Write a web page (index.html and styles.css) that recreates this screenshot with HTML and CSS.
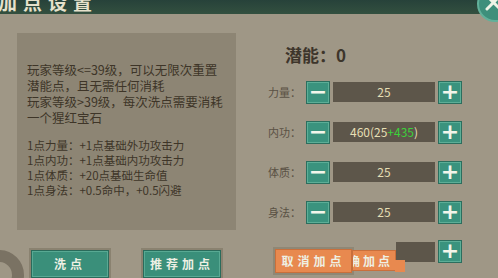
FILE: index.html
```html
<!DOCTYPE html>
<html lang="zh">
<head>
    <meta charset="UTF-8">
    <title>加点设置</title>
    <link rel="stylesheet" href="styles.css">
</head>
<body>
    <!-- Header -->
    <div class="header">
        <div class="title">加点设置</div>
    </div>
    <div class="close">
        <svg width="36" height="36" viewBox="0 0 36 36">
            <circle cx="18" cy="18" r="17" fill="#3e8f7b" stroke="#62b09a" stroke-width="2"/>
            <path d="M10 10 L23 23 M23 10 L10 23" stroke="#eef3e6" stroke-width="3" stroke-linecap="round"/>
        </svg>
    </div>
    <div class="ring"></div>

    <div class="main">
        <!-- Left: rules -->
        <div class="left">
            <div class="panel">
                <p>玩家等级&lt;=39级，可以无限次重置<br>潜能点，且无需任何消耗<br>玩家等级&gt;39级，每次洗点需要消耗<br>一个猩红宝石</p>
                <p class="effects">1点力量：+1点基础外功攻击力<br>1点内功：+1点基础内功攻击力<br>1点体质：+20点基础生命值<br>1点身法：+0.5命中，+0.5闪避</p>
            </div>
            <div class="actions">
                <div class="btn green">洗点</div>
                <div class="btn green">推荐加点</div>
            </div>
        </div>

        <!-- Right: stats -->
        <div class="right">
            <div class="potential">潜能：0</div>
            <div class="row">
                <span class="label">力量：</span>
                <div class="step">−</div>
                <div class="value">25</div>
                <div class="step">+</div>
            </div>
            <div class="row">
                <span class="label">内功：</span>
                <div class="step">−</div>
                <div class="value">460(25<span class="bonus">+435</span>)</div>
                <div class="step">+</div>
            </div>
            <div class="row">
                <span class="label">体质：</span>
                <div class="step">−</div>
                <div class="value">25</div>
                <div class="step">+</div>
            </div>
            <div class="row">
                <span class="label">身法：</span>
                <div class="step">−</div>
                <div class="value">25</div>
                <div class="step">+</div>
            </div>
            <div class="bottom">
                <div class="btn orange">取消加点</div>
                <div class="btn orange partial"><span>确加点</span></div>
                <div class="mini"></div>
                <div class="step">+</div>
            </div>
        </div>
    </div>
</body>
</html>
```

FILE: styles.css
```css
/* General */
* {
    margin: 0;
    padding: 0;
    box-sizing: border-box;
}
body {
    width: 498px;
    height: 278px;
    overflow: hidden;
    position: relative;
    background-color: #9f9786;
    font-family: "Noto Sans CJK SC", "Noto Sans", sans-serif;
    color: #3e3528;
}

/* Header */
.header {
    height: 14px;
    background: linear-gradient(#27423a, #33503f);
    overflow: hidden;
}
.title {
    margin-top: -10px;
    margin-left: -2px;
    font-size: 19px;
    font-weight: bold;
    letter-spacing: 6px;
    color: #e6e2cc;
    line-height: 24px;
}
.close {
    position: absolute;
    left: 477px;
    top: -14px;
    width: 36px;
    height: 36px;
}
.ring {
    position: absolute;
    left: -26px;
    top: 250px;
    width: 50px;
    height: 50px;
    border-radius: 50%;
    border: 12px solid #7a7263;
}

/* Layout */
.main {
    display: flex;
}

/* Left column */
.left {
    width: 262px;
    padding-left: 17px;
    padding-top: 19px;
}
.panel {
    width: 219px;
    height: 197px;
    background: #8d8574;
    padding: 29px 0 0 10px;
    font-size: 12.5px;
    line-height: 16px;
}
.effects {
    margin-top: 12px;
    font-size: 11.5px;
    line-height: 15px;
}
.actions {
    display: flex;
    gap: 34px;
    padding-left: 14px;
    margin-top: 20px;
}

/* Buttons */
.btn {
    height: 28px;
    width: 78px;
    text-align: center;
    font-size: 12px;
    font-weight: bold;
    letter-spacing: 4px;
    line-height: 26px;
    color: #eef0e4;
}
.green {
    background: #3a8f7a;
    border: 1px solid #2a6b5b;
    box-shadow: inset 0 0 0 1px #58a993, 0 0 0 2px #8a8270;
}
.orange {
    background: #e8894f;
    border: 1px solid #c96f3b;
    width: 77px;
    height: 24px;
    line-height: 22px;
    margin-top: 9px;
    box-shadow: 0 0 0 2px #8f8775;
}

/* Right column */
.right {
    padding-top: 31px;
}
.potential {
    padding-left: 23px;
    font-size: 17px;
    font-weight: bold;
    line-height: 20px;
    color: #3d352b;
}
.row {
    display: flex;
    align-items: center;
    gap: 3px;
    margin-top: 15px;
    height: 24px;
}
.row + .row {
    margin-top: 16px;
}
.label {
    width: 41px;
    padding-left: 6px;
    font-size: 11px;
    white-space: nowrap;
    color: #5a5144;
}
.step {
    width: 24px;
    height: 23px;
    background: #3a937e;
    border: 1px solid #2b6e5e;
    box-shadow: inset 0 0 0 1px #5cae97;
    color: #f2f5ea;
    font-family: "DejaVu Sans", sans-serif;
    font-size: 22px;
    font-weight: bold;
    line-height: 20px;
    text-align: center;
}
.value {
    width: 102px;
    height: 20px;
    background: #5d564a;
    color: #e6dfb4;
    font-size: 12px;
    line-height: 20px;
    text-align: center;
}
.bonus {
    color: #3bd23a;
}

/* Bottom controls */
.bottom {
    display: flex;
    align-items: flex-start;
    margin-top: 16px;
    padding-left: 13px;
}
.partial {
    width: 44px;
    height: 21px;
    margin-top: 10px;
    position: relative;
    letter-spacing: 3px;
    padding-right: 2px;
    line-height: 19px;
    box-shadow: none;
    z-index: 1;
}
.partial span {
    display: block;
    overflow: hidden;
    white-space: nowrap;
    direction: rtl;
}
.partial::after {
    content: "";
    position: absolute;
    right: -10px;
    top: 9px;
    width: 10px;
    height: 12px;
    background: #e8894f;
}
.mini {
    width: 39px;
    height: 20px;
    margin-top: 2px;
    background: #5d564a;
}
.bottom .step {
    margin-left: 3px;
}
```
